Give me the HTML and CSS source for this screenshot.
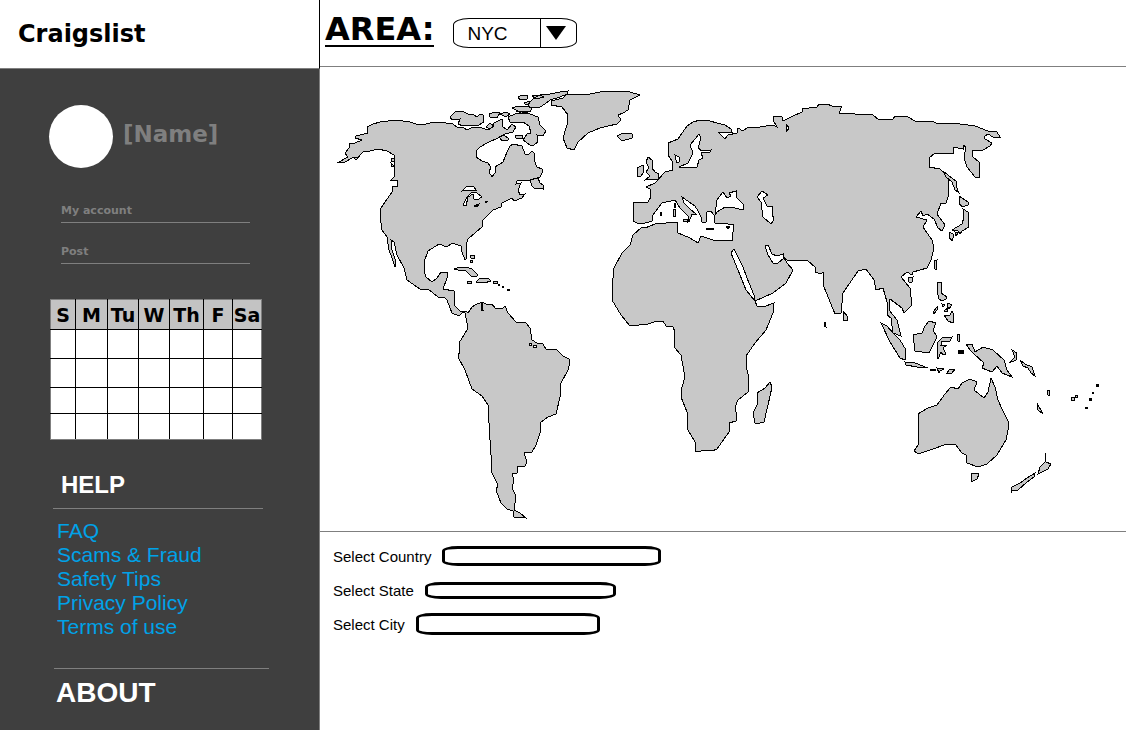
FILE: index.html
```html
<!DOCTYPE html>
<html lang="en">
<head>
<meta charset="utf-8">
<title>Craigslist</title>
<link rel="stylesheet" href="styles.css">
</head>
<body>
<div class="page">
  <aside class="sidebar">
    <header class="brand"><h1 class="brand-name">Craigslist</h1></header>
    <div class="side-body">
      <div class="profile">
        <div class="avatar"></div>
        <div class="name">[Name]</div>
      </div>
      <nav class="menu">
        <a href="#account">My account</a>
        <a href="#post">Post</a>
      </nav>
      <table class="calendar">
        <colgroup><col class="c-25"><col class="c-32"><col class="c-31"><col class="c-31"><col class="c-34"><col class="c-29"><col class="c-29"></colgroup>
        <thead><tr><th>S</th><th>M</th><th>Tu</th><th>W</th><th>Th</th><th>F</th><th>Sa</th></tr></thead>
        <tbody>
          <tr><td></td><td></td><td></td><td></td><td></td><td></td><td></td></tr>
          <tr><td></td><td></td><td></td><td></td><td></td><td></td><td></td></tr>
          <tr class="short"><td></td><td></td><td></td><td></td><td></td><td></td><td></td></tr>
          <tr class="short"><td></td><td></td><td></td><td></td><td></td><td></td><td></td></tr>
        </tbody>
      </table>
      <h2 class="help-title">HELP</h2>
      <ul class="links">
        <li><a href="#faq">FAQ</a></li>
        <li><a href="#scams">Scams &amp; Fraud</a></li>
        <li><a href="#safety">Safety Tips</a></li>
        <li><a href="#privacy">Privacy Policy</a></li>
        <li><a href="#terms">Terms of use</a></li>
      </ul>
      <h2 class="about-title">ABOUT</h2>
    </div>
  </aside>
  <main class="main">
    <header class="topbar">
      <label class="area-label" for="area">AREA:</label>
      <div class="area-box">
        <select id="area" class="area-select"><option>NYC</option></select>
        <span class="area-arrow"><svg width="20" height="14" viewBox="0 0 20 14"><path d="M0 0H20L10 14Z"/></svg></span>
      </div>
    </header>
    <section class="map">
      <svg class="world" viewBox="320 67 806 464" role="img" aria-label="World map">
        <g class="land">
          <!-- Americas -->
          <path d="M368 133L367 127L373 124L380 122L388 121L395 120L403 121L410 122L416 124L422 125L430 123L438 122L446 123L453 124L458 128L463 127L467 130L473 127L482 128L488 130L493 127L494 123L502 119L503 127L507 130L512 124L516 127L513 132L505 134L498 138L487 143L480 147L476 151L476 157L482 161L488 163L491 167L489 172L492 177L495 173L495 167L503 162L507 152L510 146L513 144L522 146L525 154L528 155L532 151L534 153L534 160L537 167L542 169L542 173L540 177L530 180L517 181L516 184L521 183L518 190L520 195L525 194L522 198L514 201L512 198L502 203L501 207L493 210L483 220L482 227L475 233L468 239L466 245L467 258L465 260L462 252L461 246L452 243L447 247L439 244L428 251L424 262L424 270L426 277L432 282L437 278L441 272L448 272L447 278L443 289L454 291L454 305L460 311L466 311L468 313L472 307L475 305L482 302L486 304L492 304L495 308L503 308L505 306L508 313L516 322L526 323L530 328L532 340L537 343L543 344L546 349L557 350L563 356L569 359L569 366L568 370L560 385L560 397L556 414L548 417L541 422L540 433L536 445L532 452L524 453L527 462L525 466L517 467L517 473L512 474L514 480L512 488L516 496L514 510L520 513L526 518L514 517L513 511L507 509L501 503L496 490L498 485L492 473L491 455L490 440L488 405L482 396L472 389L465 370L458 357L460 350L459 343L467 330L467 323L465 313L463 312L459 316L452 313L447 300L445 298L438 297L428 289L420 289L407 280L404 268L397 255L394 242L391 240L392 250L396 262L395 267L392 258L389 250L387 237L382 230L380 215L381 208L385 202L392 192L392 187L398 186L397 180L391 180L394 177L394 155L387 151L378 149L370 151L363 152L358 157L354 157L345 162L337 163L348 157L345 153L349 148L350 143L355 143L362 140L355 138L356 136Z"/>
          <path d="M450 117L455 112L462 111L468 114L473 114L477 117L480 114L483 115L484 122L477 126L470 125L463 126L458 124L460 119L452 120Z"/>
          <path d="M508 117L515 114L522 113L530 114L538 117L540 125L546 131L543 136L537 135L538 142L534 145L530 145L523 140L527 134L531 133L529 126L523 122L510 122Z"/>
          <path d="M499 137L504 135L508 138L508 140L502 141ZM515 136L522 135L523 138L516 138ZM489 114L495 112L500 113L497 118L490 117ZM500 114L506 112L510 114L506 117ZM486 127L490 123L494 126L490 129Z"/>
          <path d="M512 108L518 106L526 106L532 108L530 112L518 111ZM518 97L522 95L528 95L527 99L520 100ZM524 103L530 101L532 104L526 105ZM516 111L522 112L528 112L524 114Z"/>
          <path d="M530 102L534 98L540 95L550 94L560 92L568 91L567 94L560 97L550 100L545 104L540 107L530 107L528 105ZM532 96L540 95L544 97L536 99Z"/>
          <path d="M551 105L551 101L563 98L567 94L578 95L590 94L600 92L612 91L630 92L640 95L630 100L628 110L623 113L618 115L621 120L617 124L608 126L600 128L588 133L578 142L574 150L567 148L563 138L567 125L568 115L562 107Z"/>
          <path d="M617 136L623 133L632 134L632 138L622 141Z"/>
          <path d="M530 180L538 178L540 183L543 185L543 189L534 188L532 186Z"/>
          <path d="M454 269L460 267L466 267L472 269L478 275L476 277L471 276L465 270L458 270ZM480 278L488 278L491 281L484 283L476 282ZM467 281H471V283H467ZM493 281H497V283H493ZM470 255H474V258H471ZM470 260H472V262H470ZM507 289H509V290H507ZM502 286H503V287H502ZM498 284H499V285H498Z"/>
          <path d="M391 158H394V161H391ZM391 163L394 166L392 167ZM354 158L359 157L356 160Z"/>
          <!-- Europe, Asia and Africa -->
          <path d="M633 221L634 202L648 202L651 197L650 189L646 187L655 183L665 172L673 170L672 161L668 155L668 143L678 139L687 126L693 122L700 120L710 121L717 123L725 125L731 129L732 132L725 132L718 132L725 139L728 135L737 133L738 128L743 131L748 127L760 127L773 125L777 127L773 120L773 117L778 116L782 117L783 121L793 116L802 112L802 109L817 107L819 104L827 104L832 106L842 106L839 113L855 114L873 115L879 120L893 119L895 116L908 117L915 121L932 121L938 124L953 123L975 126L988 131L997 132L1000 137L993 137L988 134L984 137L985 139L992 143L990 146L983 150L972 151L973 157L979 162L979 177L975 177L967 167L964 158L966 147L963 145L963 149L953 147L953 153L935 153L929 158L929 167L940 169L948 177L948 197L946 203L941 203L937 214L945 225L942 231L938 228L934 219L927 214L923 216L921 211L916 217L927 220L923 227L932 240L934 248L931 260L927 268L913 272L912 275L907 272L901 277L910 288L912 305L904 313L902 308L890 299L889 310L897 320L901 336L893 333L891 318L887 315L887 302L883 288L876 290L874 280L866 269L858 271L843 293L841 313L835 314L824 287L823 272L821 274L815 272L816 268L807 260L787 260L783 257L783 254L777 256L772 254L768 245L765 246L768 255L773 263L778 263L784 258L787 263L793 270L786 283L773 293L755 301L754 295L747 278L743 267L734 249L731 253L740 275L746 290L755 301L757 306L763 307L774 303L773 313L766 330L755 343L746 356L746 367L749 377L748 392L738 400L735 407L737 417L736 421L729 423L729 432L717 449L712 451L707 450L696 452L695 442L688 430L687 412L681 397L682 387L685 377L681 355L674 347L675 332L673 327L666 326L663 321L657 321L648 324L630 326L621 315L612 300L612 288L614 268L622 253L630 245L633 235L642 227L645 228L655 224L677 222L678 233L690 238L698 243L701 236L713 240L732 241L734 224L728 224L715 223L714 215L711 211L707 212L706 222L702 222L701 217L698 211L695 206L682 197L684 203L690 209L696 214L692 214L689 222L688 216L680 208L675 200L662 203L653 215L652 221L642 224L637 223Z"/>
          <path d="M648 157L652 160L652 168L655 172L659 174L658 179L645 180L650 176L646 172L649 168L646 162ZM637 168L643 165L644 172L641 176L637 176Z"/>
          <path d="M673 209H675V216H673ZM674 203H675V207H674ZM660 212H661V215H660ZM683 219L687 219L687 222L683 221ZM706 228H713V229H706ZM726 226L730 226L728 229Z"/>
          <path d="M770 382L772 387L768 405L764 422L760 423L755 423L753 413L757 405L757 393L765 388ZM843 311L848 317L847 321L843 320ZM825 322L826 327L824 326Z"/>
          <path d="M943 171L948 175L957 182L956 186L959 193L955 190L952 182L946 177ZM959 196L968 202L968 205L962 207L959 203ZM963 209L968 212L969 227L962 231L960 234L958 231L952 230L962 224L964 217ZM949 232L953 234L953 238L952 241L949 237ZM955 232L958 233L956 236Z"/>
          <path d="M934 261L937 260L936 270L934 268ZM908 278L913 277L912 282L909 282ZM937 282L942 282L941 293L947 297L946 299L942 301L939 299L937 291ZM942 304L945 305L943 307ZM948 303L952 305L949 309L947 306ZM944 311L948 308L947 312ZM944 315L950 315L952 311L954 315L953 323L948 321ZM933 312L937 307L937 310L934 314Z"/>
          <path d="M881 323L887 326L893 333L900 340L906 350L905 360L900 358L890 342ZM905 362L915 363L928 368L917 367L906 365ZM930 369H935V370H930ZM937 368L944 369L940 371L939 373ZM947 373L950 369L955 369L952 373ZM913 335L922 333L925 326L929 321L936 323L933 330L937 337L929 353L915 351ZM937 343L942 338L952 337L950 341L942 341L941 345L947 345L943 348L946 354L943 355L941 352L938 359L937 352ZM958 334H960L959 342L957 340Z"/>
          <!-- Oceania -->
          <path d="M966 344L972 344L975 352L983 347L993 350L1004 360L1007 370L1012 377L1002 373L997 366L992 372L982 368L984 363L973 353L970 350ZM1012 350L1017 353L1016 360L1009 363L1015 357ZM1020 360L1025 364L1032 367L1035 376L1031 373L1028 368L1023 366Z"/>
          <path d="M918 414L928 408L937 405L945 394L951 387L958 389L962 383L970 379L977 382L974 390L984 398L988 392L991 378L995 387L998 400L1003 411L1008 421L1008 430L1006 440L997 455L987 464L978 467L967 463L966 455L962 453L955 444L947 444L933 449L918 454L914 451L918 445Z"/>
          <path d="M971 473L979 474L977 479L971 482ZM1045 453L1046 462L1051 464L1048 469L1038 474L1040 467L1045 462ZM1035 473L1034 477L1027 482L1018 490L1012 491L1011 493L1012 487L1020 483L1027 478ZM1037 403L1043 414L1038 410ZM1047 390L1050 391L1049 396L1047 394ZM1071 397H1074V400H1071ZM1075 395H1077V397H1075ZM1085 407H1087V408H1085Z"/>
        </g>
        <g class="water">
          <path d="M715 215L717 200L723 192L727 198L731 196L729 193L736 191L736 197L744 205L743 210L735 208L725 207L717 212Z"/>
          <path d="M757 197L762 191L768 195L763 198L767 206L773 207L772 213L774 220L771 224L763 217L761 202Z"/>
          <path d="M679 167L688 163L693 153L690 145L695 139L699 134L701 138L698 148L702 151L711 150L710 152L701 153L703 158L699 160L697 167L688 168ZM675 155L679 157L679 162L677 163L676 160ZM786 124L789 128L786 132Z"/>
          <path d="M462 191L467 186L474 187L476 190L471 190ZM472 192L467 197L463 205L466 206L468 197L473 194L474 199L477 200L482 197L477 193ZM474 206L479 204L477 207ZM485 201L488 201L486 203ZM481 303V310H483L482 303ZM529 343H531V345H529ZM533 345H536V347H533Z"/>
        </g>
        <g class="specks">
          <path d="M958 350H964V354H958ZM1089 398H1092V401H1089ZM1092 392H1094V394H1092ZM1096 384H1099V387H1096Z"/>
        </g>
      </svg>
    </section>
    <form class="filters">
      <div class="field"><label for="country">Select Country</label><select id="country" class="country"><option></option></select></div>
      <div class="field"><label for="state">Select State</label><select id="state" class="state"><option></option></select></div>
      <div class="field"><label for="city">Select City</label><select id="city" class="city"><option></option></select></div>
    </form>
  </main>
</div>
</body>
</html>
```

FILE: styles.css
```css
* { box-sizing: border-box; }
body { margin: 0; background: #fff; color: #000; font-family: "Liberation Sans", Arial, sans-serif; }
h1, h2, ul { margin: 0; padding: 0; }
.page { display: grid; grid-template-columns: 320px 1fr; min-height: 100vh; }

.sidebar { display: flex; flex-direction: column; }
.brand { height: 69px; display: flex; align-items: center; padding-left: 18px; border-right: 1px solid #000; border-bottom: 1px solid #7f7f7f; }
.brand-name { font: bold 24px/28px "DejaVu Sans", sans-serif; }
.side-body { flex: 1; background: #3f3f3f; border-right: 1px solid #7f7f7f; padding: 36px 49px 20px; }

.profile { display: flex; align-items: center; gap: 10px; }
.avatar { width: 64px; height: 63px; border-radius: 50%; background: #fff; }
.name { font: bold 23px/28px "DejaVu Sans", sans-serif; color: #7f7f7f; padding-bottom: 6px; }

.menu { display: flex; flex-direction: column; width: 189px; margin: 14px 0 35px 12px; }
.menu a { display: flex; align-items: flex-end; height: 41px; padding-bottom: 4px; border-bottom: 1px solid #7f7f7f; font: bold 11px/14px "DejaVu Sans", sans-serif; color: #7f7f7f; text-decoration: none; }

.calendar { table-layout: fixed; width: 211px; margin-left: 1px; border-collapse: collapse; border: 1px solid #7f7f7f; background: #fff; }
.calendar th { height: 30px; padding: 0; background: #c3c3c3; border: solid #000; border-width: 0 1px 1px; font: bold 19px/24px "DejaVu Sans", sans-serif; }
.calendar td { height: 29px; padding: 0; border: 1px solid #000; }
.calendar .short td { height: 26px; }
.calendar th:first-child, .calendar td:first-child { border-left-color: #7f7f7f; }
.calendar th:last-child, .calendar td:last-child { border-right-color: #7f7f7f; }
.calendar tr:last-child td { border-bottom-color: #7f7f7f; }
.c-25 { width: 25px; }
.c-29 { width: 29px; }
.c-31 { width: 31px; }
.c-32 { width: 32px; }
.c-34 { width: 34px; }

.help-title { width: 210px; margin: 30px 0 0 4px; padding: 0 0 8px 8px; border-bottom: 1px solid #7f7f7f; font-size: 24px; line-height: 30px; color: #fff; }
.links { list-style: none; margin: 10px 0 29px 8px; font-size: 21px; line-height: 24px; }
.links a { color: #00a2e8; text-decoration: none; }
.about-title { width: 215px; margin-left: 5px; padding: 7px 0 0 2px; border-top: 1px solid #7f7f7f; font-size: 28px; line-height: 34px; color: #fff; }

.main { display: flex; flex-direction: column; min-width: 0; }
.topbar { display: flex; align-items: center; gap: 19px; height: 67px; padding: 0 5px; border-bottom: 1px solid #7f7f7f; }
.area-label { font: bold 32px/32px "DejaVu Sans", sans-serif; border-bottom: 2px solid #000; margin-bottom: 7px; }
.area-box { position: relative; display: flex; width: 124px; height: 30px; }
.area-select { appearance: none; width: 100%; padding: 0 40px 0 13px; border: 1px solid #000; border-radius: 16px / 7px; background: #fff; color: #000; font: 19px "Liberation Sans", Arial, sans-serif; }
.area-arrow { position: absolute; top: 0; right: 0; bottom: 0; width: 37px; padding-left: 5px; display: flex; align-items: center; border-left: 1px solid #000; pointer-events: none; }

.map { border-bottom: 1px solid #7f7f7f; }
.world { display: block; width: 100%; height: auto; shape-rendering: crispEdges; stroke: #000; stroke-width: 1; }
.land { fill: #c8c8c8; }
.water { fill: #fff; }
.specks { fill: #000; stroke: none; }

.filters { padding: 7px 13px; }
.field { display: flex; align-items: center; gap: 11px; height: 34px; font-size: 15px; }
.field select { appearance: none; border: 3px solid #000; border-radius: 16px / 5px; background: #fff; }
.country { width: 219px; height: 20px; }
.state { width: 191px; height: 17px; }
.city { width: 184px; height: 22px; }
```
